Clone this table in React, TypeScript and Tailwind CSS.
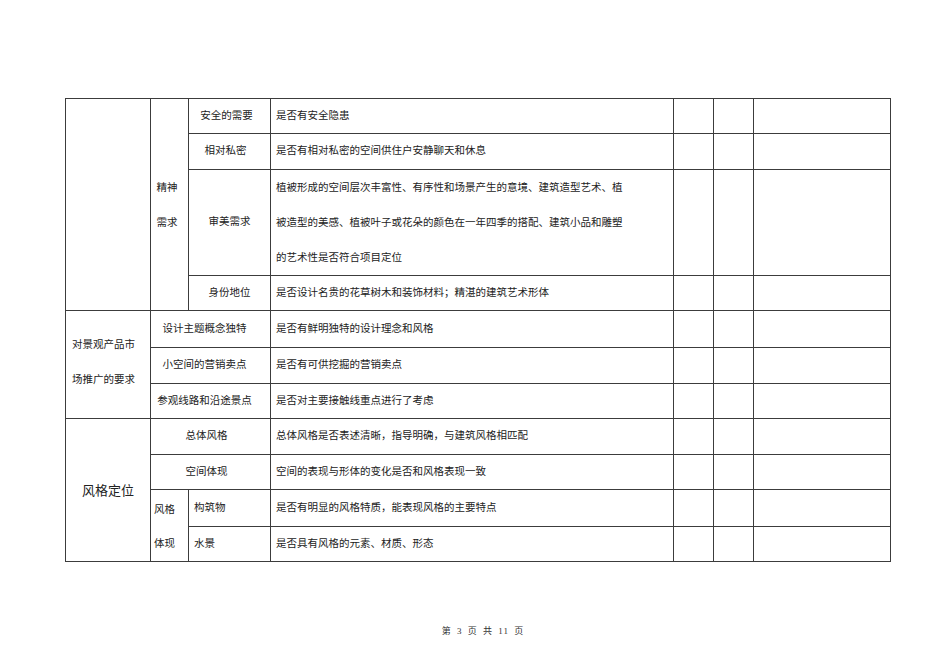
import React from "react";

const B = "border border-[#3c3c3c]";

export default function App() {
  return (
    <div className="w-[950px] h-[672px] bg-white text-[#222] text-[10.5px] leading-none" style={{ fontFamily: '"Liberation Serif", "Noto Sans CJK SC", serif' }}>
      <div className="pt-[98px] pl-[65px]">
        <table className="table-fixed border-collapse w-[825px]">
          <colgroup>
            <col className="w-[85px]" />
            <col className="w-[38px]" />
            <col className="w-[82px]" />
            <col className="w-[403px]" />
            <col className="w-[40px]" />
            <col className="w-[40px]" />
            <col className="w-[137px]" />
          </colgroup>
          <tbody>
            <tr className="h-[35px]">
              <td rowSpan={4} className={B}></td>
              <td rowSpan={4} className={`${B} text-center pr-[5px] leading-[35px]`}>精神<br />需求</td>
              <td className={`${B} text-center pr-[6px]`}>安全的需要</td>
              <td className={`${B} pl-[5px]`}>是否有安全隐患</td>
              <td className={B}></td>
              <td className={B}></td>
              <td className={B}></td>
            </tr>
            <tr className="h-[36px]">
              <td className={`${B} text-center pr-[8px]`}>相对私密</td>
              <td className={`${B} pl-[5px]`}>是否有相对私密的空间供住户安静聊天和休息</td>
              <td className={B}></td>
              <td className={B}></td>
              <td className={B}></td>
            </tr>
            <tr className="h-[106px]">
              <td className={`${B} text-center`}>审美需求</td>
              <td className={`${B} pl-[5px] leading-[35px]`}>
                植被形成的空间层次丰富性、有序性和场景产生的意境、建筑造型艺术、植<br />
                被造型的美感、植被叶子或花朵的颜色在一年四季的搭配、建筑小品和雕塑<br />
                的艺术性是否符合项目定位
              </td>
              <td className={B}></td>
              <td className={B}></td>
              <td className={B}></td>
            </tr>
            <tr className="h-[35px]">
              <td className={`${B} text-center`}>身份地位</td>
              <td className={`${B} pl-[5px]`}>是否设计名贵的花草树木和装饰材料；精湛的建筑艺术形体</td>
              <td className={B}></td>
              <td className={B}></td>
              <td className={B}></td>
            </tr>
            <tr className="h-[37px]">
              <td rowSpan={3} className={`${B} pl-[6px] leading-[35px] pb-[5px]`}>对景观产品市<br />场推广的要求</td>
              <td colSpan={2} className={`${B} text-center pr-[12px]`}>设计主题概念独特</td>
              <td className={`${B} pl-[5px]`}>是否有鲜明独特的设计理念和风格</td>
              <td className={B}></td>
              <td className={B}></td>
              <td className={B}></td>
            </tr>
            <tr className="h-[36px]">
              <td colSpan={2} className={`${B} text-center pr-[12px]`}>小空间的营销卖点</td>
              <td className={`${B} pl-[5px]`}>是否有可供挖掘的营销卖点</td>
              <td className={B}></td>
              <td className={B}></td>
              <td className={B}></td>
            </tr>
            <tr className="h-[35px]">
              <td colSpan={2} className={`${B} text-center pr-[12px]`}>参观线路和沿途景点</td>
              <td className={`${B} pl-[5px]`}>是否对主要接触线重点进行了考虑</td>
              <td className={B}></td>
              <td className={B}></td>
              <td className={B}></td>
            </tr>
            <tr className="h-[36px]">
              <td rowSpan={4} className={`${B} text-center text-[13px]`}>风格定位</td>
              <td colSpan={2} className={`${B} text-center pr-[8px]`}>总体风格</td>
              <td className={`${B} pl-[5px]`}>总体风格是否表述清晰，指导明确，与建筑风格相匹配</td>
              <td className={B}></td>
              <td className={B}></td>
              <td className={B}></td>
            </tr>
            <tr className="h-[35px]">
              <td colSpan={2} className={`${B} text-center pr-[8px]`}>空间体现</td>
              <td className={`${B} pl-[5px]`}>空间的表现与形体的变化是否和风格表现一致</td>
              <td className={B}></td>
              <td className={B}></td>
              <td className={B}></td>
            </tr>
            <tr className="h-[36px]">
              <td rowSpan={2} className={`${B} pl-[3px] leading-[34px] pt-[3px]`}>风格<br />体现</td>
              <td className={`${B} pl-[5px]`}>构筑物</td>
              <td className={`${B} pl-[5px]`}>是否有明显的风格特质，能表现风格的主要特点</td>
              <td className={B}></td>
              <td className={B}></td>
              <td className={B}></td>
            </tr>
            <tr className="h-[35px]">
              <td className={`${B} pl-[5px]`}>水景</td>
              <td className={`${B} pl-[5px]`}>是否具有风格的元素、材质、形态</td>
              <td className={B}></td>
              <td className={B}></td>
              <td className={B}></td>
            </tr>
          </tbody>
        </table>
      </div>
      <div className="mt-[65px] pl-[16px] text-center text-[9px] text-[#333] tracking-[1px]" style={{ wordSpacing: "2px" }}>
        第 3 页 共 11 页
      </div>
    </div>
  );
}
